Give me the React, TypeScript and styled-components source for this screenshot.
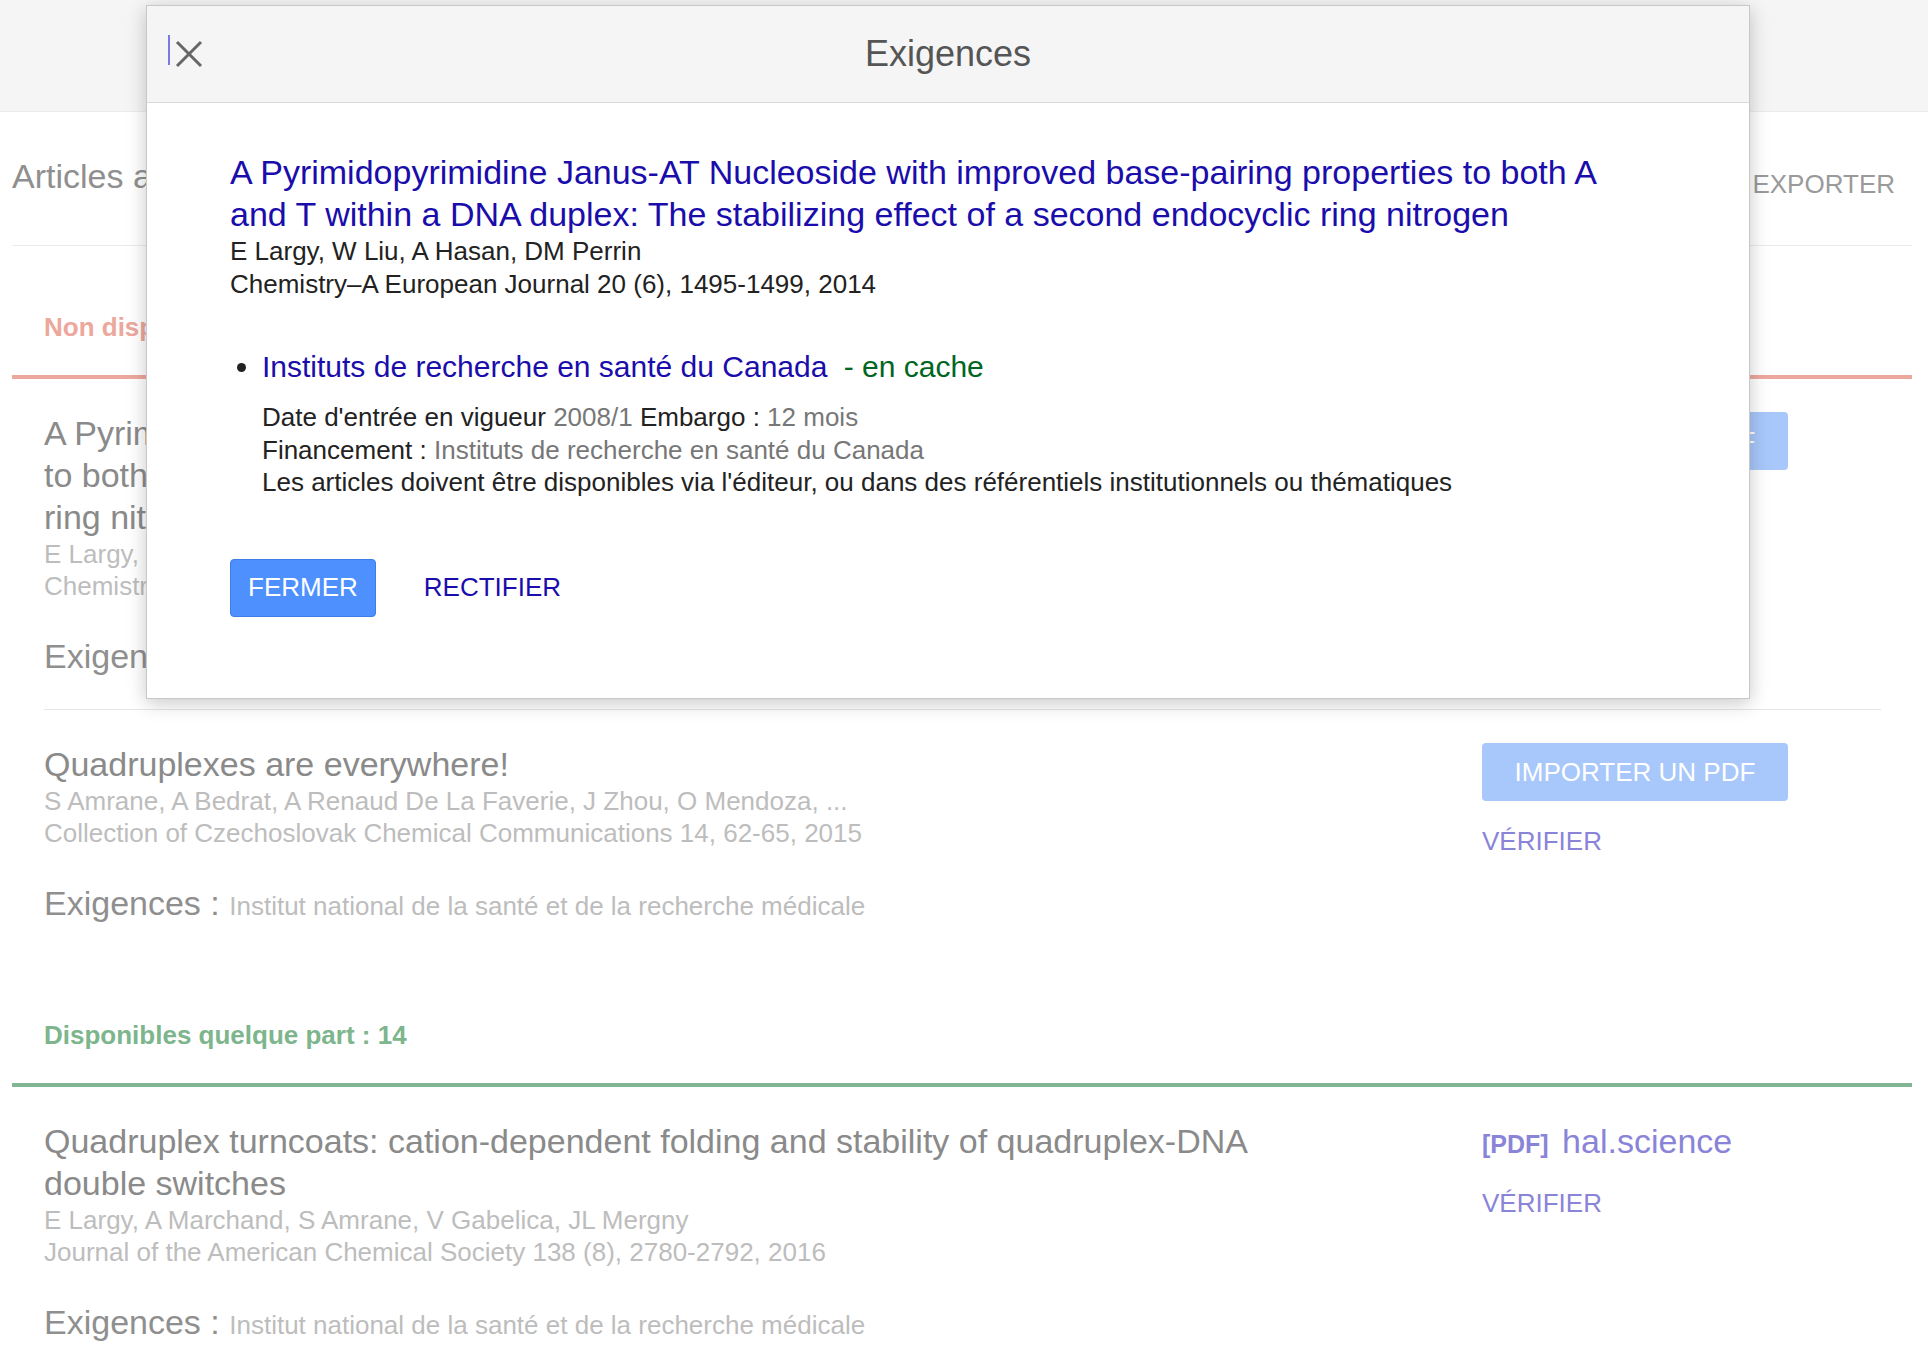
import React from "react";
import styled, { createGlobalStyle } from "styled-components";

const GlobalStyle = createGlobalStyle`
  html, body { margin: 0; padding: 0; background: #ffffff; }
  body { font-family: "Liberation Sans", Arial, sans-serif; overflow: hidden; }
  * { box-sizing: border-box; }
  button { font-family: inherit; cursor: pointer; }
`;

const Page = styled.div`
  position: relative;
  width: 1928px;
  min-height: 1356px;
`;

const TopBar = styled.div`
  height: 112px;
  background: #f5f5f5;
  border-bottom: 1px solid #ececec;
`;

const Main = styled.main`
  padding: 0 16px 0 12px;
`;

const Toolbar = styled.div`
  display: flex;
  justify-content: space-between;
  align-items: flex-start;
  height: 134px;
  padding-top: 43px;
  border-bottom: 1px solid #ebebeb;
`;

const PageTitle = styled.h1`
  margin: 0;
  font-size: 34px;
  line-height: 42px;
  font-weight: normal;
  color: #8f8f8f;
`;

const ExportButton = styled.button`
  margin-top: 13px;
  padding: 0 17px 0 0;
  border: none;
  background: none;
  font-size: 26px;
  line-height: 32px;
  color: #9a9a9a;
`;

const SectionHeader = styled.div<{ $color: string; $line: string; $top: number }>`
  padding: ${(p) => p.$top}px 32px 32px;
  font-size: 26px;
  line-height: 32px;
  font-weight: bold;
  color: ${(p) => p.$color};
  border-bottom: 4px solid ${(p) => p.$line};
`;

const ArticleList = styled.div`
  padding: 0 31px 0 32px;
`;

const Article = styled.article`
  display: grid;
  grid-template-columns: 1240px 1fr;
  column-gap: 198px;
  padding: 33px 0 29px;
  border-bottom: 1px solid #e6e6e6;
  &:last-child {
    border-bottom: none;
  }
`;

const ArticleText = styled.div`
  display: flex;
  flex-direction: column;
`;

const ArticleTitle = styled.h3`
  margin: 0;
  font-size: 34px;
  line-height: 42px;
  font-weight: normal;
  color: #8a8a8a;
`;

const Meta = styled.div`
  font-size: 26px;
  line-height: 32px;
  color: #bdbdbd;
`;

const Requirements = styled.div`
  margin-top: 33px;
  font-size: 34px;
  line-height: 42px;
  color: #8f8f8f;
`;

const RequirementValue = styled.span`
  font-size: 26px;
  color: #bdbdbd;
`;

const ActionColumn = styled.div`
  display: flex;
  flex-direction: column;
  align-items: flex-start;
  gap: 24px;
`;

const ImportButton = styled.button`
  width: 306px;
  height: 58px;
  border: none;
  border-radius: 4px;
  background: #a8c7fa;
  color: #ffffff;
  font-size: 26px;
`;

const VerifyLink = styled.a`
  font-size: 26px;
  line-height: 32px;
  color: #8a84d9;
  text-decoration: none;
`;

const PdfLink = styled.a`
  font-size: 34px;
  line-height: 42px;
  margin-bottom: -2px;
  color: #8a84d9;
  text-decoration: none;
`;

const PdfTag = styled.span`
  font-size: 25px;
  font-weight: bold;
  margin-right: 4px;
`;

/* ---------- Modal ---------- */

const Modal = styled.div`
  position: absolute;
  left: 146px;
  top: 5px;
  width: 1604px;
  background: #ffffff;
  border: 1px solid #c8c8c8;
  box-shadow: 0 4px 18px rgba(0, 0, 0, 0.22);
`;

const ModalHeader = styled.div`
  display: grid;
  grid-template-columns: 1fr auto 1fr;
  align-items: center;
  height: 97px;
  background: #f5f5f5;
  border-bottom: 1px solid #d9d9d9;
`;

const CloseButton = styled.button`
  justify-self: start;
  display: flex;
  align-items: center;
  margin-left: 21px;
  padding: 0;
  border: none;
  background: none;
`;

const Caret = styled.span`
  display: block;
  width: 2px;
  height: 30px;
  margin-bottom: 8px;
  background: #7c7ae0;
`;

const ModalTitle = styled.h2`
  margin: 0;
  font-size: 36px;
  line-height: 42px;
  font-weight: normal;
  color: #555555;
`;

const ModalBody = styled.div`
  padding: 48px 84px 81px 83px;
`;

const PaperTitle = styled.a`
  display: block;
  max-width: 1400px;
  font-size: 34px;
  line-height: 42px;
  color: #1a0dab;
  text-decoration: none;
`;

const PaperMeta = styled.div`
  font-size: 26px;
  line-height: 32.5px;
  color: #222222;
`;

const MandateList = styled.ul`
  margin: 48px 0 0;
  padding-left: 32px;
  font-size: 30px;
  line-height: 38px;
  color: #222222;
`;

const FunderLink = styled.a`
  color: #1a0dab;
  text-decoration: none;
`;

const Cached = styled.span`
  margin-left: 8px;
  color: #006621;
`;

const Details = styled.div`
  margin-top: 15px;
  font-size: 26px;
  line-height: 32.5px;
  color: #222222;
`;

const Muted = styled.span`
  color: #777777;
`;

const ModalFooter = styled.div`
  display: flex;
  align-items: center;
  margin-top: 60px;
`;

const PrimaryButton = styled.button`
  height: 58px;
  padding: 0 17px;
  border: 1px solid #3b7ee9;
  border-radius: 4px;
  background: #4d90fe;
  color: #ffffff;
  font-size: 26px;
`;

const TextButton = styled.button`
  height: 58px;
  margin-left: 31px;
  padding: 0 17px;
  border: none;
  background: none;
  color: #1a0dab;
  font-size: 26px;
`;

const CloseIcon = () => (
  <svg width="28" height="28" viewBox="0 0 28 28" style={{ marginLeft: 5 }}>
    <path d="M2 2 L26 26 M26 2 L2 26" stroke="#666666" strokeWidth="3" fill="none" />
  </svg>
);

type Paper = {
  title: string;
  authors: string;
  journal: string;
  requirement: string;
  action: "import" | "pdf";
};

const unavailable: Paper[] = [
  {
    title:
      "A Pyrimidopyrimidine Janus-AT Nucleoside with improved base-pairing properties to both A and T within a DNA duplex: The stabilizing effect of a second endocyclic ring nitrogen",
    authors: "E Largy, W Liu, A Hasan, DM Perrin",
    journal: "Chemistry–A European Journal 20 (6), 1495-1499, 2014",
    requirement: "Instituts de recherche en santé du Canada",
    action: "import",
  },
  {
    title: "Quadruplexes are everywhere!",
    authors: "S Amrane, A Bedrat, A Renaud De La Faverie, J Zhou, O Mendoza, ...",
    journal: "Collection of Czechoslovak Chemical Communications 14, 62-65, 2015",
    requirement: "Institut national de la santé et de la recherche médicale",
    action: "import",
  },
];

const available: Paper[] = [
  {
    title:
      "Quadruplex turncoats: cation-dependent folding and stability of quadruplex-DNA double switches",
    authors: "E Largy, A Marchand, S Amrane, V Gabelica, JL Mergny",
    journal: "Journal of the American Chemical Society 138 (8), 2780-2792, 2016",
    requirement: "Institut national de la santé et de la recherche médicale",
    action: "pdf",
  },
];

const ArticleRow = ({ paper }: { paper: Paper }) => (
  <Article>
    <ArticleText>
      <ArticleTitle>{paper.title}</ArticleTitle>
      <Meta>{paper.authors}</Meta>
      <Meta>{paper.journal}</Meta>
      <Requirements>
        Exigences : <RequirementValue>{paper.requirement}</RequirementValue>
      </Requirements>
    </ArticleText>
    <ActionColumn>
      {paper.action === "import" ? (
        <ImportButton>IMPORTER UN PDF</ImportButton>
      ) : (
        <PdfLink href="#">
          <PdfTag>[PDF]</PdfTag> hal.science
        </PdfLink>
      )}
      <VerifyLink href="#">VÉRIFIER</VerifyLink>
    </ActionColumn>
  </Article>
);

export default function App() {
  return (
    <Page>
      <GlobalStyle />
      <TopBar />
      <Main>
        <Toolbar>
          <PageTitle>Articles avec obligations de libre accès</PageTitle>
          <ExportButton>EXPORTER</ExportButton>
        </Toolbar>

        <SectionHeader $color="#eda79d" $line="#eda89e" $top={65}>
          Non disponibles : 2
        </SectionHeader>
        <ArticleList>
          {unavailable.map((p) => (
            <ArticleRow key={p.title} paper={p} />
          ))}
        </ArticleList>

        <SectionHeader $color="#7db58c" $line="#82b593" $top={63}>
          Disponibles quelque part : 14
        </SectionHeader>
        <ArticleList>
          {available.map((p) => (
            <ArticleRow key={p.title} paper={p} />
          ))}
        </ArticleList>
      </Main>

      <Modal role="dialog">
        <ModalHeader>
          <CloseButton aria-label="Fermer">
            <Caret />
            <CloseIcon />
          </CloseButton>
          <ModalTitle>Exigences</ModalTitle>
          <span />
        </ModalHeader>
        <ModalBody>
          <PaperTitle href="#">
            A Pyrimidopyrimidine Janus-AT Nucleoside with improved base-pairing properties to both A
            and T within a DNA duplex: The stabilizing effect of a second endocyclic ring nitrogen
          </PaperTitle>
          <PaperMeta>E Largy, W Liu, A Hasan, DM Perrin</PaperMeta>
          <PaperMeta>Chemistry–A European Journal 20 (6), 1495-1499, 2014</PaperMeta>

          <MandateList>
            <li>
              <FunderLink href="#">Instituts de recherche en santé du Canada</FunderLink>{" "}
              <Cached>- en cache</Cached>
              <Details>
                <div>
                  Date d'entrée en vigueur <Muted>2008/1</Muted> Embargo : <Muted>12 mois</Muted>
                </div>
                <div>
                  Financement : <Muted>Instituts de recherche en santé du Canada</Muted>
                </div>
                <div>
                  Les articles doivent être disponibles via l'éditeur, ou dans des référentiels
                  institutionnels ou thématiques
                </div>
              </Details>
            </li>
          </MandateList>

          <ModalFooter>
            <PrimaryButton>FERMER</PrimaryButton>
            <TextButton>RECTIFIER</TextButton>
          </ModalFooter>
        </ModalBody>
      </Modal>
    </Page>
  );
}
